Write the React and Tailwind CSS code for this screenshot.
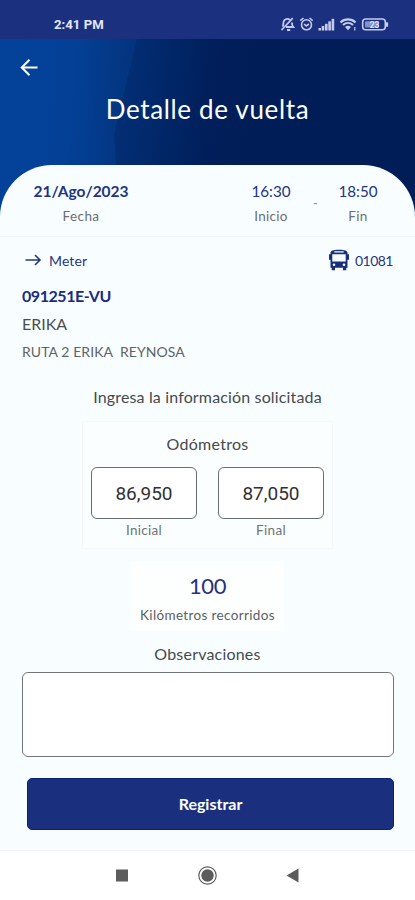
import React, { useState } from "react";

const SignalIcons = () => (
  <svg width="112" height="18" viewBox="0 0 112 18" fill="none" stroke="#c3cbee" strokeWidth="1.4">
    {/* muted bell */}
    <path d="M3.5 11.5c1-1 .8-2.500 1-4.500C5 3.800 9 3 11 5M13 7.500c-.2 1.800 0 3 1.300 4.500H7M8 15h3.200" strokeWidth="1.800" />
    <path d="M2.500 15L13.800 3.200" strokeWidth="1.700" />
    {/* alarm */}
    <circle cx="27.500" cy="9.800" r="5" strokeWidth="1.600" />
    <path d="M21.300 5.600l3.200-2.600M33.700 5.600l-3.200-2.600M25 9l2.300 1.900L30 9" strokeWidth="1.600" />
    {/* signal bars */}
    <g fill="#c3cbee" stroke="none">
      <rect x="39.500" y="13" width="2.500" height="2.500" />
      <rect x="42.700" y="11" width="2.600" height="4.500" />
      <rect x="46" y="8.800" width="2.600" height="6.700" />
      <rect x="49.300" y="6.300" width="2.600" height="9.200" />
      <rect x="52.600" y="3.800" width="2.600" height="11.700" />
    </g>
    {/* wifi */}
    <path d="M61.500 7.400c4.200-4 10.800-4 15 0M64 10c3-2.700 7-2.700 10 0" strokeWidth="2.100" />
    <path d="M66 12a4.500 4.500 0 0 1 6 0l-3 3.300z" fill="#c3cbee" stroke="none" />
    <path d="M75.800 12v3.500" strokeWidth="1.200" />
    {/* battery */}
    <rect x="83.700" y="4" width="22.600" height="10.800" rx="3" strokeWidth="1.600" />
    <rect x="86" y="6.200" width="14" height="6.400" rx="1" fill="#8792cb" stroke="none" />
    <path d="M108 7.300v4.400" strokeWidth="2.200" />
    <text x="95.500" y="12.500" textAnchor="middle" fontSize="8.500" fontWeight="500" fontFamily="Roboto, sans-serif" fill="#e4e8fb" stroke="none">23</text>
  </svg>
);

const BusIcon = () => (
  <svg width="22" height="22" viewBox="0 0 22 22" fill="#1a2f7b">
    <path d="M2.500 4C2.500 1.500 5 0.700 11 0.700S19.500 1.500 19.500 4v1.300H21v5.500h-1.500v7.900h-1.200v2.500h-3.300v-2.500H7v2.500H3.700v-2.500H2.500v-7.900H1V5.300h1.500z" />
    <path d="M6.300 2.200h9.400v1.300H6.300zM4.300 5.200h13.400v7.400H4.300z" fill="#f8feff" />
    <circle cx="6" cy="15.800" r="1.300" fill="#f8feff" />
    <circle cx="16" cy="15.800" r="1.300" fill="#f8feff" />
  </svg>
);

const Header = () => (
  <header className="relative h-[180px] bg-[linear-gradient(95deg,#04429a_0%,#034096_18%,#033987_28%,#01296b_40%,#001f5b_50%,#001d57_60%,#001d57_100%)]">
    <svg className="absolute inset-0" width="415" height="180">
      <defs>
        <linearGradient id="beam" x1="0" x2="1" y1="0" y2="0">
          <stop offset="0" stopColor="#001c57" stopOpacity="0.35" />
          <stop offset="1" stopColor="#001c57" stopOpacity="0" />
        </linearGradient>
        <linearGradient id="shade" x1="0" x2="1" y1="0" y2="0">
          <stop offset="0" stopColor="#002a6e" stopOpacity="0" />
          <stop offset="1" stopColor="#002a6e" stopOpacity="0.15" />
        </linearGradient>
      </defs>
      <path d="M75 0H137L114 95L120 180H105L92 60Z" fill="url(#shade)" />
      <path d="M137 0H250V180H120L114 95Z" fill="url(#beam)" />
    </svg>
    <div className="relative px-5 pt-[18px]">
      <svg width="19" height="20" viewBox="0 0 19 20" fill="none" stroke="#ffffff" strokeWidth="2.100">
        <path d="M17.500 10.500H2M9.500 2.800L1.800 10.500L9.500 18.200" />
      </svg>
    </div>
    <h1 className="relative mt-[15px] text-center text-[26px] leading-[34px] tracking-[0.660px] text-white">
      Detalle de vuelta
    </h1>
  </header>
);

const TripTimes = () => (
  <div className="flex h-[72px] border-b border-[#f3f6f8] pt-[15px] text-center leading-[22px]">
    <div className="w-[162px]">
      <p className="text-[15.500px] font-bold text-[#23347f]">21/Ago/2023</p>
      <p className="mt-[3px] text-[13.500px] tracking-[0.400px] text-[#6b6e72]">Fecha</p>
    </div>
    <div className="ml-[67px] w-[84px]">
      <p className="text-[15.200px] text-[#23347f]">16:30</p>
      <p className="mt-[3px] text-[13.500px] tracking-[0.300px] text-[#6b6e72]">Inicio</p>
    </div>
    <p className="mt-[12px] w-[3px] text-[13px] leading-[22px] text-[#8b8e92]">-</p>
    <div className="w-[84px]">
      <p className="text-[15.200px] text-[#23347f]">18:50</p>
      <p className="mt-[3px] text-[13.500px] tracking-[0.300px] text-[#6b6e72]">Fin</p>
    </div>
  </div>
);

const Odometer = ({ label, value, onChange }) => (
  <label className="block w-[106px] text-center">
    <input
      value={value}
      onChange={(e) => onChange(e.target.value)}
      className="block h-[52px] w-full rounded-[6px] border border-[#6a6d6f] bg-white text-center font-[Roboto,sans-serif] text-[19px] text-[#303134] outline-none"
    />
    <span className="mt-px block text-[13.500px] leading-[20px] tracking-[0.300px] text-[#707376]">{label}</span>
  </label>
);

const App = () => {
  const [initial, setInitial] = useState("86,950");
  const [final, setFinal] = useState("87,050");
  const [notes, setNotes] = useState("");

  return (
    <div className="h-[900px] w-[415px] overflow-hidden bg-white font-[Lato,sans-serif]">
      <div className="flex h-[39px] items-start justify-between bg-[#1b307f] pt-[15px] pr-[24px] pl-[54px]">
        <span className="font-[Roboto,sans-serif] text-[13.200px] leading-[20px] font-bold text-[#e2e7fa]">2:41 PM</span>
        <SignalIcons />
      </div>
      <Header />

      <main className="relative -mt-[54px] h-[685px] rounded-t-[52px] bg-[#f8feff]">
        <TripTimes />

        <div className="flex h-[46px] items-center pr-[22px] pl-[25px] text-[#26377d]">
          <svg width="17" height="14" viewBox="0 0 17 14" fill="none" stroke="#26377d" strokeWidth="1.600">
            <path d="M0.500 7H15M10 2l5 5l-5 5" />
          </svg>
          <span className="ml-[7px] text-[14px] tracking-[0.100px]">Meter</span>
          <span className="ml-auto"><BusIcon /></span>
          <span className="ml-[5px] text-[14px] tracking-[-0.500px]">01081</span>
        </div>

        <div className="pl-[22px]">
          <p className="mt-[2px] text-[16px] leading-[22px] font-bold tracking-[-0.450px] text-[#1a2a80]">091251E-VU</p>
          <p className="mt-[6px] text-[16px] leading-[22px] text-[#4c4f52]">ERIKA</p>
          <p className="mt-[6px] text-[14px] leading-[22px] tracking-[0.080px] whitespace-pre text-[#606366]">RUTA 2 ERIKA  REYNOSA</p>
        </div>

        <p className="mt-[23px] text-center text-[16px] leading-[22px] tracking-[0.150px] text-[#46494c]">Ingresa la información solicitada</p>

        <section className="mx-auto mt-[13px] h-[128px] w-[251px] border border-[#f5f7f9] bg-[#fafeff] pt-[11px]">
          <h2 className="text-center text-[16px] leading-[22px] tracking-[0.300px] text-[#46494c]">Odómetros</h2>
          <div className="mt-[12px] flex justify-between px-[8px]">
            <Odometer label="Inicial" value={initial} onChange={setInitial} />
            <Odometer label="Final" value={final} onChange={setFinal} />
          </div>
        </section>

        <section className="mx-auto mt-[12px] h-[70px] w-[153px] bg-[#fdfefe] pt-[10px] text-center">
          <p className="text-[22px] leading-[30px] tracking-[-0.500px] text-[#23347f]">100</p>
          <p className="mt-[4px] text-[13.500px] leading-[20px] tracking-[0.350px] whitespace-nowrap text-[#5c5f62]">Kilómetros recorridos</p>
        </section>

        <p className="mt-[12px] text-center text-[16px] leading-[22px] tracking-[0.200px] text-[#46494c]">Observaciones</p>
        <div className="pr-[21px] pl-[22px]">
          <textarea
            value={notes}
            onChange={(e) => setNotes(e.target.value)}
            className="mt-[7px] block h-[85px] w-full resize-none rounded-[6px] border border-[#737678] bg-white p-3 outline-none"
          />
        </div>
        <button className="mt-[21px] ml-[27px] block h-[52px] w-[367px] rounded-[5px] border border-[#0c2272] bg-[#1a307e] text-[16px] font-bold text-white">
          Registrar
        </button>
      </main>

      <nav className="flex h-[50px] items-center border-t border-[#f3f5f6] bg-white pl-[115px]">
        <svg width="185" height="20" viewBox="0 0 185 20" fill="#5c5c5c">
          <rect x="1" y="3.500" width="12" height="12" />
          <circle cx="92.500" cy="9.500" r="6.200" />
          <circle cx="92.500" cy="9.500" r="8.700" fill="none" stroke="#5c5c5c" strokeWidth="1.200" />
          <path d="M171.500 9.500l12-7v14z" />
        </svg>
      </nav>
    </div>
  );
};

export default App;
